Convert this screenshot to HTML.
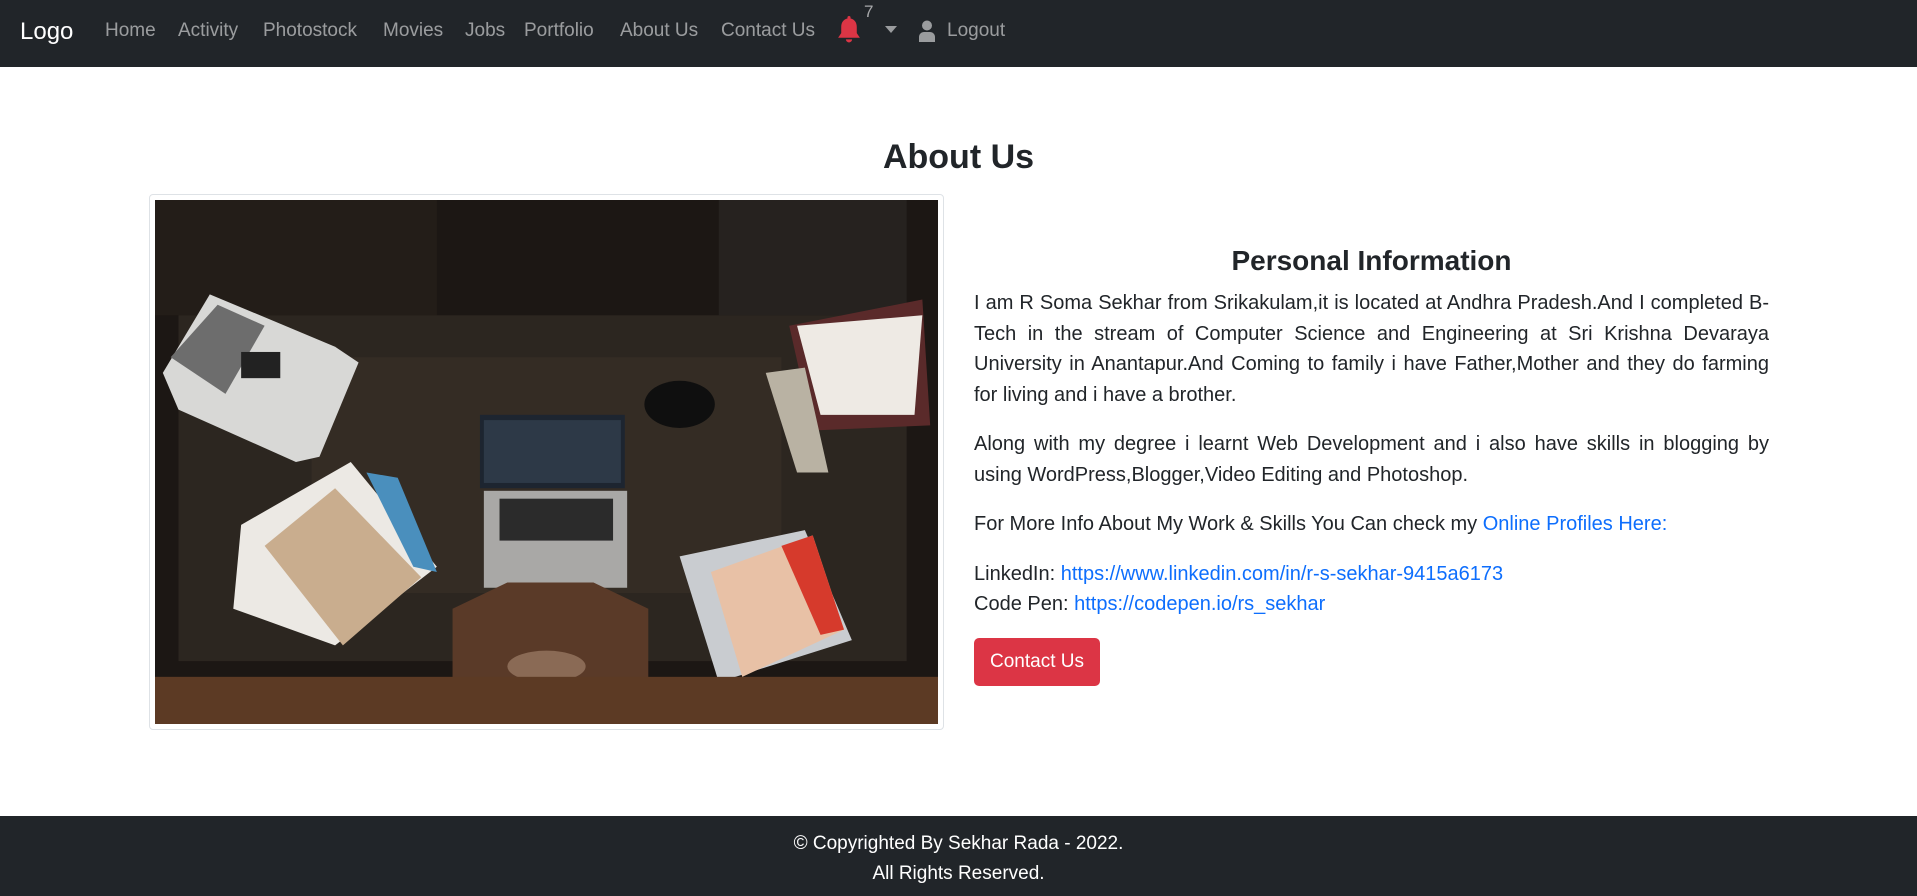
<!DOCTYPE html>
<html><head><meta charset="utf-8"><style>
*{margin:0;padding:0;box-sizing:border-box}
body{width:1917px;height:896px;overflow:hidden;background:#fff;font-family:"Liberation Sans",sans-serif;color:#212529;position:relative}
.nav{position:absolute;left:0;top:0;width:1917px;height:67px;background:#212529}
.nav span{position:absolute;top:20px;font-size:19px;color:rgba(255,255,255,.55);white-space:nowrap}
.nav .logo{left:20px;top:18px;font-size:24px;color:#fff}
h1{position:absolute;top:138px;left:0;width:1917px;text-align:center;font-size:34px;font-weight:bold}
.frame{position:absolute;left:149px;top:194px;width:795px;height:536px;border:1px solid #dee2e6;border-radius:4px;padding:5px}
.frame svg{display:block;width:783px;height:524px}
.col{position:absolute;left:974px;top:245px;width:795px}
h2{text-align:center;font-size:28px;font-weight:bold;margin-bottom:5px;height:38px}
p{font-size:20px;line-height:30.5px;text-align:justify;margin-bottom:19px}
a{color:#0d6efd;text-decoration:none}
.btn{display:inline-block;background:#dc3545;color:#fff;font-size:19px;padding:0 16px;height:48px;line-height:48px;border-radius:5px;margin-top:-1px}
.foot{position:absolute;left:0;top:816px;width:1917px;height:80px;background:#212529;color:#fff;text-align:center;font-size:19px;line-height:30px;padding-top:13px}
</style></head><body>
<div class="nav">
<span class="logo">Logo</span>
<span style="left:105px">Home</span>
<span style="left:178px">Activity</span>
<span style="left:263px">Photostock</span>
<span style="left:383px">Movies</span>
<span style="left:465px">Jobs</span>
<span style="left:524px">Portfolio</span>
<span style="left:620px">About Us</span>
<span style="left:721px">Contact Us</span>
<svg style="position:absolute;left:836px;top:16px" width="26" height="28" viewBox="0 0 16 18"><path d="M8 0c.6 0 1 .4 1 1v.6C11.5 2.1 13 4.2 13 7v4l2 3H1l2-3V7c0-2.8 1.5-4.9 4-5.4V1c0-.6.4-1 1-1z M6 15h4a2 2 0 0 1-4 0z" fill="#dc3545"/></svg>
<span style="left:864px;top:2px;font-size:17px;color:rgba(255,255,255,.6)">7</span>
<svg style="position:absolute;left:885px;top:26px" width="12" height="8"><path d="M0 0h12L6 7z" fill="rgba(255,255,255,.55)"/></svg>
<svg style="position:absolute;left:918px;top:20px" width="18" height="22" viewBox="0 0 18 22"><circle cx="9" cy="5.5" r="5" fill="rgba(255,255,255,.55)"/><path d="M1 22v-5c0-3 2.5-5 5-5h6c2.5 0 5 2 5 5v5z" fill="rgba(255,255,255,.55)"/></svg>
<span style="left:947px">Logout</span>
</div>
<h1>About Us</h1>
<div class="frame"><svg viewBox="0 0 100 100" preserveAspectRatio="none">
<rect width="100" height="100" fill="#1c1714"/>
<rect x="0" y="0" width="36" height="22" fill="#231d18"/>
<rect x="72" y="0" width="24" height="22" fill="#26221f"/>
<rect x="3" y="22" width="93" height="66" fill="#2c2620"/>
<rect x="20" y="30" width="60" height="45" fill="#3a3128" opacity=".6"/>
<polygon points="1,33 7,18 23,28 26,31 21,49 18,50 3,40" fill="#d8d8d6"/>
<polygon points="2,30 8,20 14,24 9,37" fill="#6d6d6d"/>
<rect x="11" y="29" width="5" height="5" fill="#222"/>
<polygon points="11,62 25,50 36,70 23,85 10,78" fill="#ece9e4"/>
<polygon points="14,66 23,55 34,72 24,85" fill="#c9ad8e"/>
<polygon points="27,52 31,53 36,71 33,70" fill="#4a8fbd"/>
<rect x="41.5" y="41" width="18.5" height="14" fill="#1d2530"/>
<rect x="42" y="42" width="17.5" height="12" fill="#2d3947"/>
<rect x="42" y="55.5" width="18.3" height="18.5" fill="#a9a8a6"/>
<rect x="44" y="57" width="14.5" height="8" fill="#2b2b2b"/>
<circle cx="67" cy="39" r="4.5" fill="#0f0f0f"/>
<polygon points="81,24 98,19 99,43 84,44" fill="#5a2a2a"/>
<polygon points="82,24 98,22 97,41 85,41" fill="#eeeae4"/>
<polygon points="78,33 83,32 86,52 82,52" fill="#b9b2a3"/>
<polygon points="67,68 83,63 89,84 72,92" fill="#c9ccd0"/>
<polygon points="71,71 84,64 88,82 75,91" fill="#e8c1a6"/>
<polygon points="80,66 84,64 88,82 85,83" fill="#d63a2c"/>
<polygon points="38,78 45,73 56,73 63,78 63,92 38,92" fill="#5a3a28"/>
<ellipse cx="50" cy="89" rx="5" ry="3" fill="#8a6a55"/>
<rect x="0" y="91" width="100" height="9" fill="#5c3a24"/>
</svg></div>
<div class="col">
<h2>Personal Information</h2>
<p>I am R Soma Sekhar from Srikakulam,it is located at Andhra Pradesh.And I completed B-Tech in the stream of Computer Science and Engineering at Sri Krishna Devaraya University in Anantapur.And Coming to family i have Father,Mother and they do farming for living and i have a brother.</p>
<p>Along with my degree i learnt Web Development and i also have skills in blogging by using WordPress,Blogger,Video Editing and Photoshop.</p>
<p>For More Info About My Work &amp; Skills You Can check my <a>Online Profiles Here:</a></p>
<p>LinkedIn: <a>https://www.linkedin.com/in/r-s-sekhar-9415a6173</a><br>Code Pen: <a>https://codepen.io/rs_sekhar</a></p>
<span class="btn">Contact Us</span>
</div>
<div class="foot">© Copyrighted By Sekhar Rada - 2022.<br>All Rights Reserved.</div>
</body></html>
